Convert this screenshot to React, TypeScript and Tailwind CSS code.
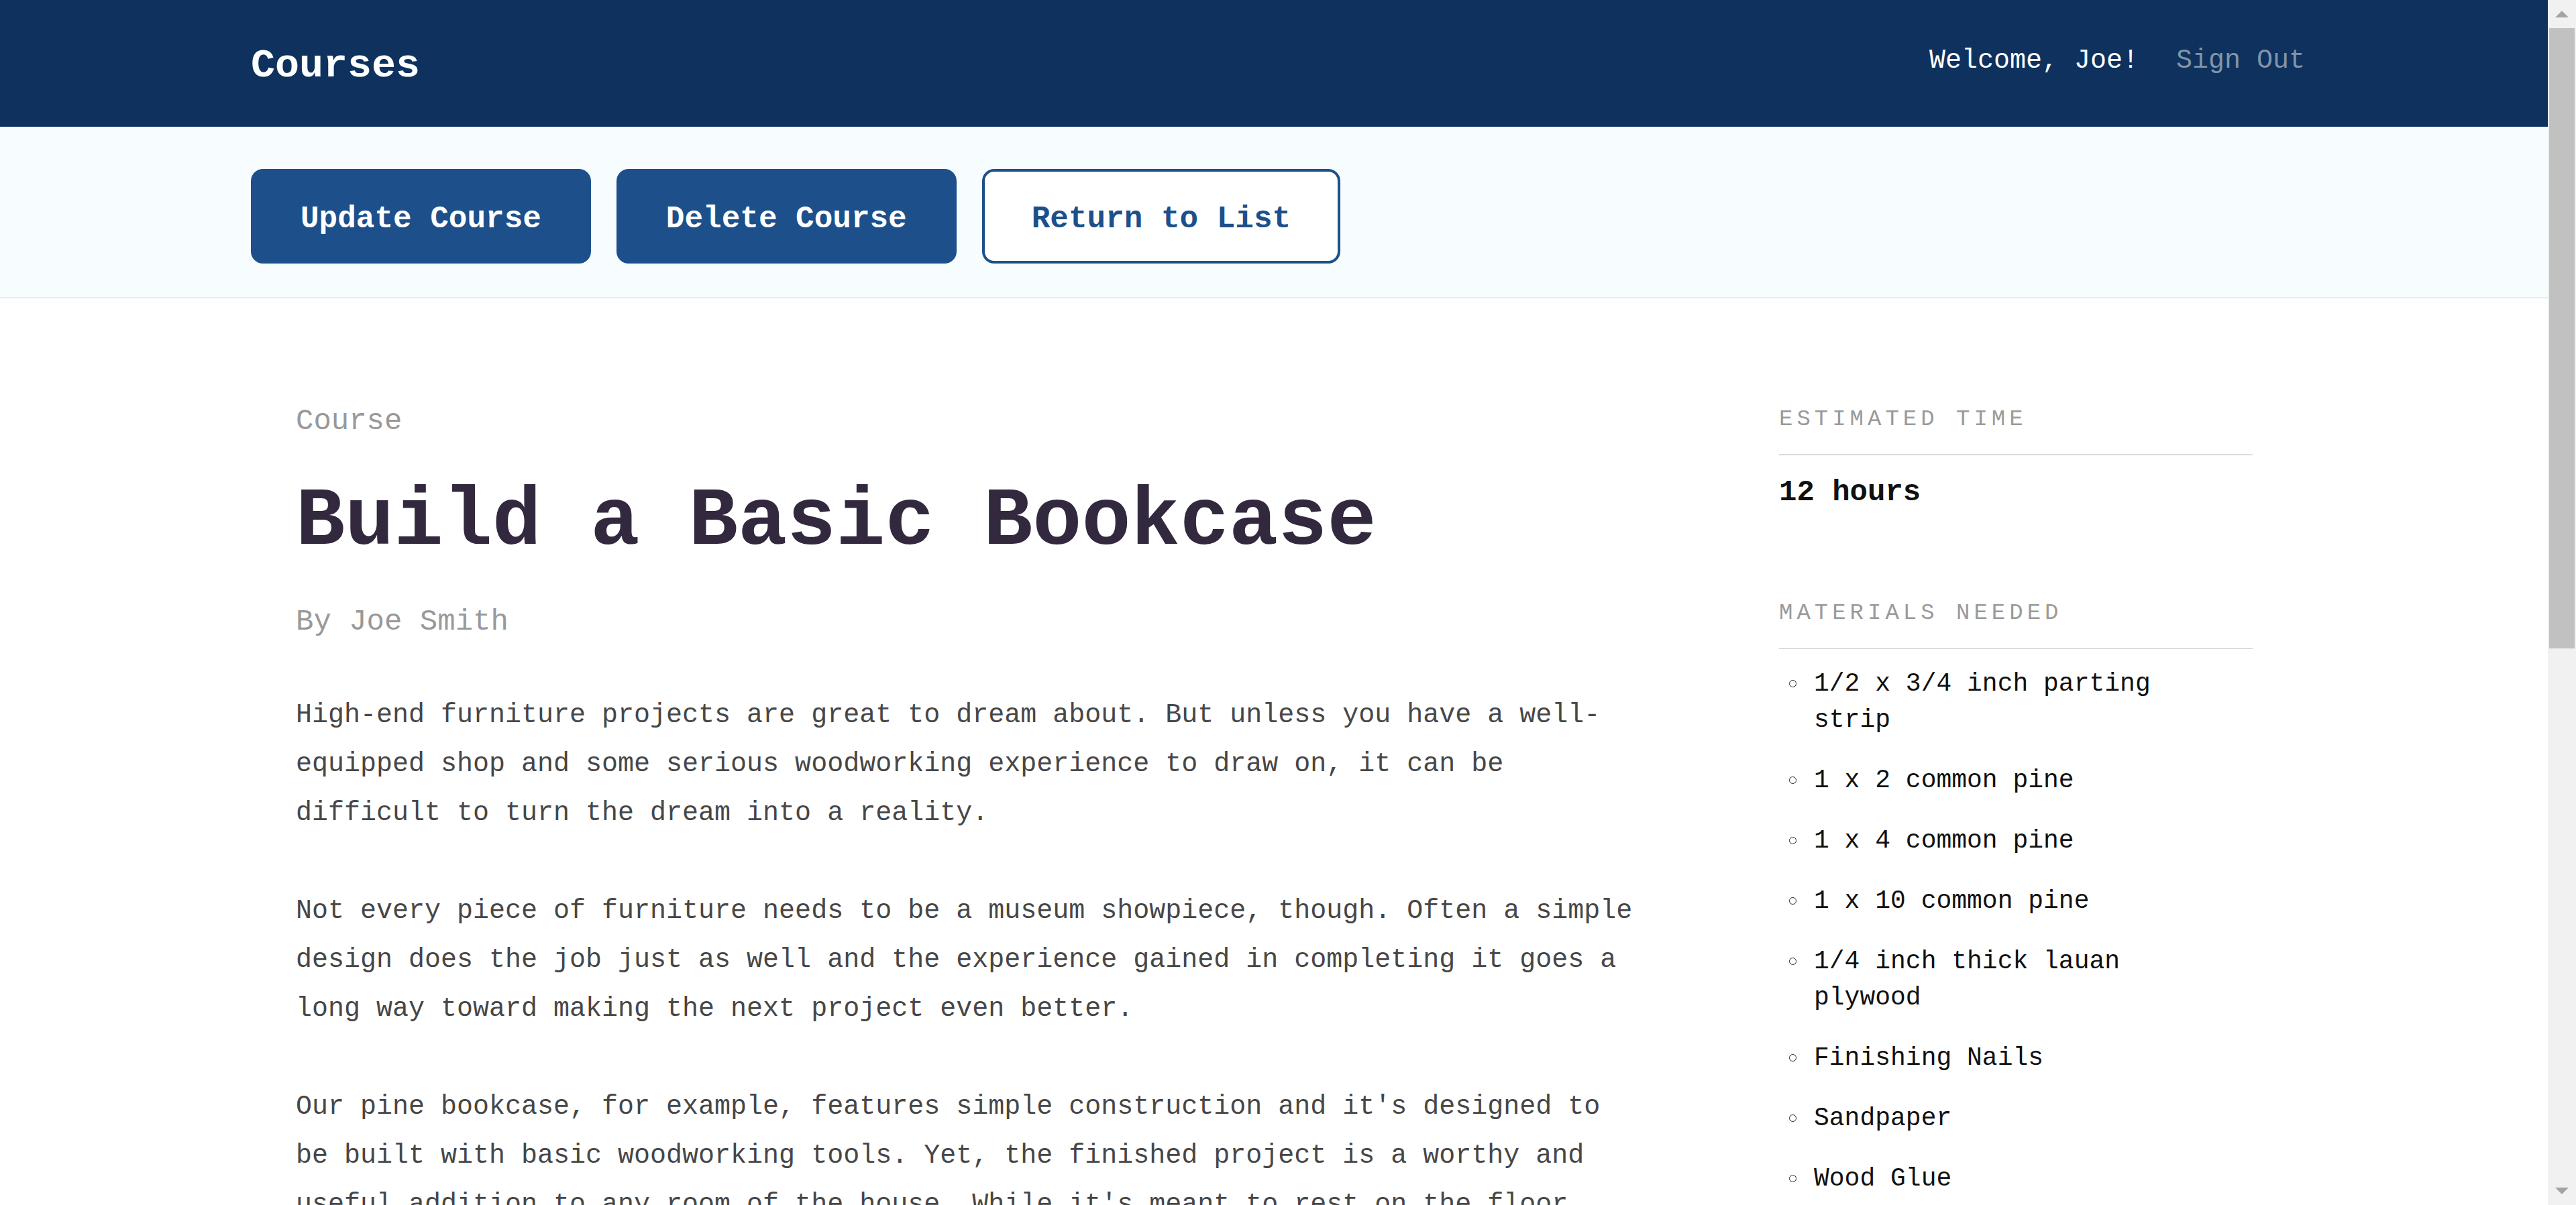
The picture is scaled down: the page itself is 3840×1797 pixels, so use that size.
import React from "react";

const mono = "font-['Liberation_Mono','DejaVu_Sans_Mono',monospace]";

const paragraphs = [
  "High-end furniture projects are great to dream about. But unless you have a well-equipped shop and some serious woodworking experience to draw on, it can be difficult to turn the dream into a reality.",
  "Not every piece of furniture needs to be a museum showpiece, though. Often a simple design does the job just as well and the experience gained in completing it goes a long way toward making the next project even better.",
  "Our pine bookcase, for example, features simple construction and it's designed to be built with basic woodworking tools. Yet, the finished project is a worthy and useful addition to any room of the house. While it's meant to rest on the floor, you can convert the bookcase to a wall-hanging unit or utility cabinet by modifying the design a bit.",
];

const materials = [
  "1/2 x 3/4 inch parting strip",
  "1 x 2 common pine",
  "1 x 4 common pine",
  "1 x 10 common pine",
  "1/4 inch thick lauan plywood",
  "Finishing Nails",
  "Sandpaper",
  "Wood Glue",
  "Wood Filler",
  "Minwax Oil Based Polyurethane",
];

// 擬似スクロールバー
function Scrollbar() {
  return (
    <div className="w-[42px] shrink-0 h-full bg-[#f1f1f1] flex flex-col">
      <div className="h-[42px] flex items-center justify-center">
        <svg width="20" height="10" viewBox="0 0 20 10">
          <polygon points="10,0 20,10 0,10" fill="#a3a3a3" />
        </svg>
      </div>
      <div className="h-[925px] mx-[2px] bg-[#c1c1c1]"></div>
      <div className="flex-1"></div>
      <div className="h-[42px] flex items-center justify-center">
        <svg width="20" height="10" viewBox="0 0 20 10">
          <polygon points="0,0 20,0 10,10" fill="#a3a3a3" />
        </svg>
      </div>
    </div>
  );
}

export default function App() {
  return (
    <div className={`h-[1797px] w-full flex overflow-hidden bg-white ${mono}`}>
      <div className="flex-1 min-w-0 overflow-hidden">
        {/* ヘッダー */}
        <header className="h-[189px] bg-[#0e325d]">
          <div className="h-full pl-[374px] pr-[362px] flex items-center justify-between">
            <h1 className="text-[60px] font-bold text-white leading-none mt-[6px]">
              Courses
            </h1>
            <nav className="flex items-center gap-[56px] text-[40px] leading-none mb-[8px]">
              <span className="text-white">Welcome, Joe!</span>
              <a className="text-[#8094ab]">Sign Out</a>
            </nav>
          </div>
        </header>

        {/* アクションバー */}
        <div className="bg-[#f7fcff] border-b-2 border-[#d6f4fb] pt-[63px] pb-[50px] pl-[374px]">
          <div className="flex gap-[38px]">
            <button className="h-[141px] px-[74px] pt-[8px] rounded-[18px] bg-[#1d508a] text-white text-[46px] font-bold leading-none">
              Update Course
            </button>
            <button className="h-[141px] px-[74px] pt-[8px] rounded-[18px] bg-[#1d508a] text-white text-[46px] font-bold leading-none">
              Delete Course
            </button>
            <button className="h-[141px] px-[70px] pt-[8px] rounded-[18px] border-[4px] border-[#1d508a] bg-white text-[#1d508a] text-[46px] font-bold leading-none">
              Return to List
            </button>
          </div>
        </div>

        {/* コース詳細 */}
        <section className="pl-[441px] pt-[150px] flex gap-[211px]">
          <main className="w-[2000px] shrink-0">
            <p className="text-[44px] leading-[66px] text-[#999999]">Course</p>
            <h2 className="mt-[45px] text-[122px] leading-[146px] font-bold text-[#33293f]">
              Build a Basic Bookcase
            </h2>
            <p className="mt-[42px] text-[44px] leading-[66px] text-[#999999]">
              By Joe Smith
            </p>
            <div className="mt-[70px] flex flex-col gap-[73px]">
              {paragraphs.map((text, i) => (
                <p key={i} className="text-[40px] leading-[73px] text-[#474747]">
                  {text}
                </p>
              ))}
            </div>
          </main>

          <aside className="w-[706px] shrink-0 pt-[5px]">
            <h3 className="text-[34px] leading-[51px] tracking-[6px] text-[#9a9a9a] pb-[26px] border-b-2 border-[#dcdcdc]">
              ESTIMATED TIME
            </h3>
            <p className="mt-[22px] text-[44px] leading-[66px] font-bold text-[#111111]">
              12 hours
            </p>
            <h3 className="mt-[122px] text-[34px] leading-[51px] tracking-[6px] text-[#9a9a9a] pb-[26px] border-b-2 border-[#dcdcdc]">
              MATERIALS NEEDED
            </h3>
            <ul className="mt-[25px] w-[652px] pl-[15px] flex flex-col gap-[36px]">
              {materials.map((m) => (
                <li key={m} className="flex items-start gap-[26px] text-[38px] leading-[54px] text-[#111111]">
                  <span className="mt-[21px] w-[11px] h-[11px] shrink-0 rounded-full border-[1.5px] border-[#222222]"></span>
                  <span>{m}</span>
                </li>
              ))}
            </ul>
          </aside>
        </section>
      </div>
      <Scrollbar />
    </div>
  );
}
